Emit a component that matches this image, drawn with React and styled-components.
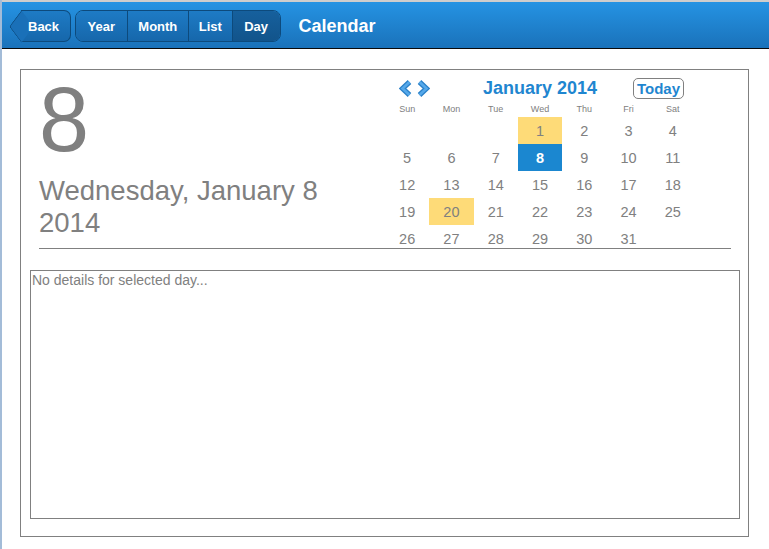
import React from 'react';
import styled, { createGlobalStyle } from 'styled-components';

const Global = createGlobalStyle`
  html, body { margin: 0; padding: 0; background: #fff; }
  body {
    font-family: "Liberation Sans", Arial, sans-serif;
    border-left: 2px solid #a3bcd8;
    min-height: 549px;
    box-sizing: border-box;
  }
`;

const FONT = `"Liberation Sans", Arial, sans-serif`;

const Header = styled.header`
  height: 46px;
  box-sizing: content-box;
  border-top: 2px solid #cdcdcd;
  border-bottom: 1px solid #0a0a0a;
  background: linear-gradient(#2593e3, #1a72ba);
  display: flex;
  align-items: center;
  padding: 2px 0 0 7px;
  height: 44px;
`;

const BackButton = styled.button`
  position: relative;
  z-index: 0;
  height: 32px;
  box-sizing: border-box;
  margin-left: 12px;
  padding: 0 11px 0 7px;
  border: 1px solid #0d4a7c;
  border-left: none;
  border-radius: 0 7px 7px 0;
  background: linear-gradient(#1e7bc5, #1667ab);
  color: #fff;
  font: bold 13px ${FONT};
  cursor: pointer;
  &::before {
    content: '';
    position: absolute;
    z-index: -1;
    left: -11.3px;
    top: 3.7px;
    width: 22.6px;
    height: 22.6px;
    box-sizing: border-box;
    background: #1a70b8;
    border-left: 1px solid #0d4a7c;
    border-bottom: 1px solid #0d4a7c;
    border-radius: 0 0 0 3px;
    transform: scaleX(0.75) rotate(45deg);
  }
`;

const Segmented = styled.div`
  display: flex;
  height: 32px;
  box-sizing: border-box;
  margin-left: 4px;
  border: 1px solid #0d4a7c;
  border-radius: 8px;
  overflow: hidden;
`;

const SegButton = styled.button`
  border: none;
  border-left: 1px solid #0d4a7c;
  &:first-child { border-left: none; }
  padding: 0 ${p => p.$pad}px;
  color: #fff;
  font: bold 13px ${FONT};
  background: ${p => (p.$active ? 'linear-gradient(#16609d, #12548b)' : 'linear-gradient(#1e7bc5, #1667ab)')};
  cursor: pointer;
`;

const Title = styled.h1`
  margin: 0 0 0 18px;
  color: #fff;
  font: bold 18px ${FONT};
`;

const Main = styled.main`
  padding: 20px 20px 0 18px;
`;

const Panel = styled.section`
  border: 1px solid #808080;
  height: 468px;
  box-sizing: border-box;
  display: flex;
  flex-direction: column;
`;

const Top = styled.div`
  display: flex;
  padding: 0 17px 0 18px;
`;

const DateColumn = styled.div`
  flex: 1;
  color: #808080;
`;

const BigDay = styled.div`
  margin-top: 5px;
  font: 90px/90px ${FONT};
`;

const LongDate = styled.div`
  margin-top: 10px;
  font: 27.5px/32px ${FONT};
`;

const Calendar = styled.div`
  width: 310px;
  margin: 6px 36px 0 0;
`;

const CalHeader = styled.div`
  display: grid;
  grid-template-columns: 1fr auto 1fr;
  align-items: center;
  height: 25px;
`;

const Arrows = styled.div`
  justify-self: start;
  margin-left: 14px;
  display: flex;
  gap: 5px;
`;

const MonthTitle = styled.div`
  color: #1f86d0;
  font: bold 18px ${FONT};
`;

const TodayButton = styled.button`
  justify-self: end;
  margin-right: 11px;
  height: 21px;
  box-sizing: border-box;
  padding: 0 3px;
  border: 1px solid #808080;
  border-radius: 5px;
  background: #fff;
  color: #1f86d0;
  font: bold 15px ${FONT};
  line-height: 17px;
`;

const DayNames = styled.div`
  display: grid;
  grid-template-columns: repeat(7, 1fr);
  height: 16px;
  align-items: center;
`;

const DayName = styled.div`
  text-align: center;
  color: #808080;
  font: 9px ${FONT};
`;

const Grid = styled.div`
  display: grid;
  grid-template-columns: repeat(7, 1fr);
  grid-auto-rows: 27px;
`;

const Cell = styled.div`
  display: flex;
  align-items: center;
  justify-content: center;
  font: ${p => (p.$selected ? 'bold' : 'normal')} 14.5px ${FONT};
  color: ${p => (p.$selected ? '#fff' : '#808080')};
  background: ${p => (p.$selected ? '#1b87d0' : p.$event ? '#fedb78' : 'transparent')};
`;

const Rule = styled.hr`
  margin: -4px 17px 0 18px;
  border: none;
  border-top: 1px solid #808080;
  height: 0;
`;

const Details = styled.div`
  flex: 1;
  margin: 21px 8px 17px 9px;
  border: 1px solid #808080;
  padding: 1px 1px;
  color: #808080;
  font: 14px ${FONT};
`;

function Chevron({ dir }) {
  const d = dir === 'left' ? 'M10.5 2 L3.5 8.5 L10.5 15' : 'M2.5 2 L9.5 8.5 L2.5 15';
  return (
    <svg width="13" height="17" viewBox="0 0 13 17">
      <path d={d} fill="none" stroke="#2a80c8" strokeWidth="5.2" strokeLinejoin="miter" />
      <path d={d} fill="none" stroke="#55a8ea" strokeWidth="2.6" strokeLinejoin="miter" />
    </svg>
  );
}

const days = [];
for (let i = 0; i < 3; i++) days.push(null);
for (let d = 1; d <= 31; d++) days.push(d);

export default function App() {
  return (
    <>
      <Global />
      <Header>
        <BackButton>Back</BackButton>
        <Segmented>
          <SegButton $pad={11.5}>Year</SegButton>
          <SegButton $pad={10.75}>Month</SegButton>
          <SegButton $pad={9.75}>List</SegButton>
          <SegButton $pad={11.5} $active>Day</SegButton>
        </Segmented>
        <Title>Calendar</Title>
      </Header>
      <Main>
        <Panel>
          <Top>
            <DateColumn>
              <BigDay>8</BigDay>
              <LongDate>
                Wednesday, January 8<br />2014
              </LongDate>
            </DateColumn>
            <Calendar>
              <CalHeader>
                <Arrows>
                  <Chevron dir="left" />
                  <Chevron dir="right" />
                </Arrows>
                <MonthTitle>January 2014</MonthTitle>
                <TodayButton>Today</TodayButton>
              </CalHeader>
              <DayNames>
                {['Sun', 'Mon', 'Tue', 'Wed', 'Thu', 'Fri', 'Sat'].map(n => (
                  <DayName key={n}>{n}</DayName>
                ))}
              </DayNames>
              <Grid>
                {days.map((d, i) => (
                  <Cell key={i} $selected={d === 8} $event={d === 1 || d === 20}>
                    {d}
                  </Cell>
                ))}
              </Grid>
            </Calendar>
          </Top>
          <Rule />
          <Details>No details for selected day...</Details>
        </Panel>
      </Main>
    </>
  );
}
